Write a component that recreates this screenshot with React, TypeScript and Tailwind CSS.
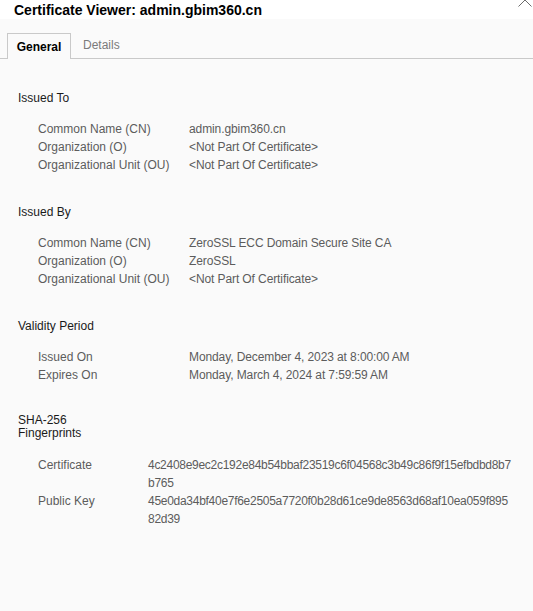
const font = { fontFamily: '"Liberation Sans", Arial, sans-serif' };

type Row = { label: string; value: string[] };

function Section({ title, rows, valueCol }: { title: string; rows: Row[]; valueCol: string }) {
  return (
    <div>
      <div className="pl-[18px] text-[12px] leading-[18px] text-[#1a1a1a]">{title}</div>
      <div className="mt-[13px]">
        {rows.map((r) => (
          <div key={r.label} className="flex text-[12px] leading-[18px] text-[#5c5c5c]">
            <div className={`pl-[38px] shrink-0 ${valueCol}`}>{r.label}</div>
            <div className="tracking-[-0.1px]">
              {r.value.map((v) => (
                <div key={v}>{v}</div>
              ))}
            </div>
          </div>
        ))}
      </div>
    </div>
  );
}

export default function App() {
  return (
    <div className="relative w-[533px] h-[611px] bg-[#fafafa] overflow-hidden" style={font}>
      <div className="h-[19px] bg-white pl-[14px] text-[14px] leading-[20px] font-bold text-black">
        Certificate Viewer: admin.gbim360.cn
      </div>
      <svg className="absolute right-[1px] top-0" width="14" height="8" viewBox="0 0 14 8">
        <path d="M0.5 7.5 L7 1 L13.5 7.5" stroke="#6b6b6b" strokeWidth="1" fill="none" transform="translate(0,-1)" />
      </svg>

      <div className="mt-[13px] flex items-end border-b border-[#c9c9c9]">
        <div className="w-[7px]" />
        <div className="-mb-px h-[26px] w-[64px] border border-b-0 border-[#c9c9c9] bg-[#fafafa] flex items-center justify-center text-[12px] font-bold text-black">
          General
        </div>
        <div className="h-[26px] pl-[12px] flex items-center text-[12px] text-[#7a7a7a]">Details</div>
      </div>

      <div className="pt-[30px]">
        <Section
          title="Issued To"
          valueCol="w-[189px]"
          rows={[
            { label: "Common Name (CN)", value: ["admin.gbim360.cn"] },
            { label: "Organization (O)", value: ["<Not Part Of Certificate>"] },
            { label: "Organizational Unit (OU)", value: ["<Not Part Of Certificate>"] },
          ]}
        />
        <div className="mt-[29px]">
          <Section
            title="Issued By"
            valueCol="w-[189px]"
            rows={[
              { label: "Common Name (CN)", value: ["ZeroSSL ECC Domain Secure Site CA"] },
              { label: "Organization (O)", value: ["ZeroSSL"] },
              { label: "Organizational Unit (OU)", value: ["<Not Part Of Certificate>"] },
            ]}
          />
        </div>
        <div className="mt-[29px]">
          <Section
            title="Validity Period"
            valueCol="w-[189px]"
            rows={[
              { label: "Issued On", value: ["Monday, December 4, 2023 at 8:00:00\u2009AM"] },
              { label: "Expires On", value: ["Monday, March 4, 2024 at 7:59:59\u2009AM"] },
            ]}
          />
        </div>

        <div className="mt-[30px]">
          <div className="pl-[18px] w-[100px] text-[12px] leading-[13px] text-[#1a1a1a]">
            SHA-256 Fingerprints
          </div>
          <div className="mt-[16px]">
            {[
              { label: "Certificate", value: ["4c2408e9ec2c192e84b54bbaf23519c6f04568c3b49c86f9f15efbdbd8b7", "b765"] },
              { label: "Public Key", value: ["45e0da34bf40e7f6e2505a7720f0b28d61ce9de8563d68af10ea059f895", "82d39"] },
            ].map((r) => (
              <div key={r.label} className="flex text-[12px] leading-[18px] text-[#5c5c5c]">
                <div className="pl-[38px] w-[148px] shrink-0">{r.label}</div>
                <div className="tracking-[-0.28px]">
                  {r.value.map((v) => (
                    <div key={v}>{v}</div>
                  ))}
                </div>
              </div>
            ))}
          </div>
        </div>
      </div>
    </div>
  );
}
